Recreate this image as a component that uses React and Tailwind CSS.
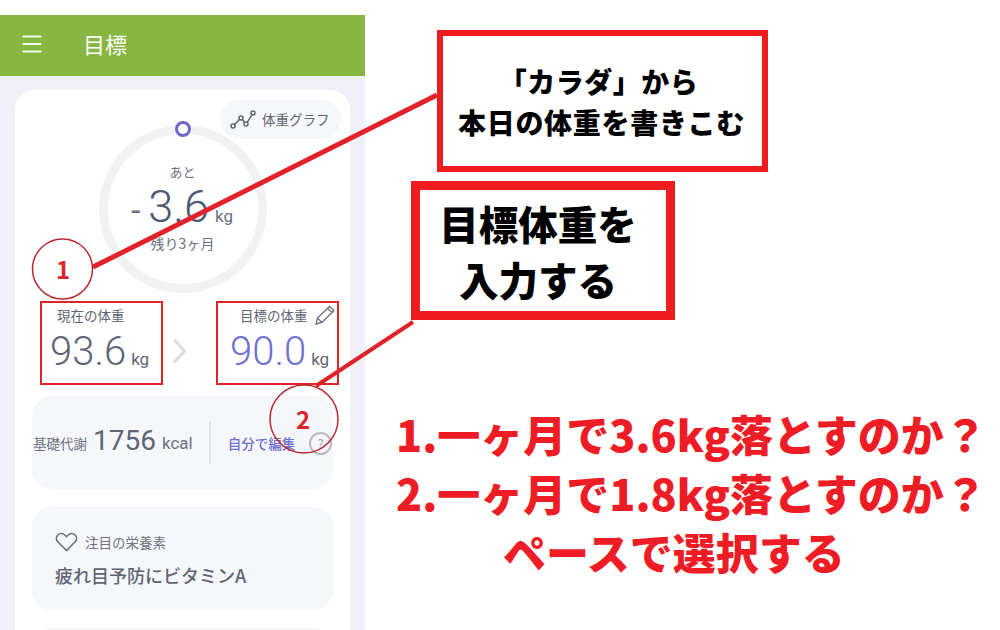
import { Menu } from "lucide-react";

const jp = "font-['Noto_Sans_CJK_JP','Noto_Sans',sans-serif]";

function Ring() {
  return (
    <div className="relative mx-auto w-[168px] h-[168px] rounded-full border-[9px] border-[#f2f2f3] flex flex-col items-center text-[#6d7280]">
      <div className="absolute -top-[13px] left-[67px] w-[16px] h-[16px] rounded-full border-[3px] border-[#6f68c9] bg-white"></div>
      <span className="mt-[28px] text-[13px] leading-[20px]">あと</span>
      <div className="flex items-baseline h-[50px] -ml-[1px] font-['Roboto',sans-serif]">
        <span className="text-[34px] leading-[50px] mr-[8px]">-</span>
        <span className="text-[45px] leading-[50px] font-light text-[#4f5872]">3.6</span>
        <span className="text-[17px] ml-[6px]">kg</span>
      </div>
      <span className="text-[14px] leading-[20px] mt-[1px]">残り3ヶ月</span>
    </div>
  );
}

function WeightRow() {
  return (
    <div className="flex items-start mt-[13px] pl-[9px] text-[#5f6575]">
      <div className="w-[124px]">
        <div className="pl-[16px] text-[13.500px] leading-[18px]">現在の体重</div>
        <div className="flex items-baseline mt-[5px] pl-[9px] font-['Roboto',sans-serif]">
          <span className="text-[40px] leading-[46px] font-light">93.6</span>
          <span className="text-[17px] ml-[5px]">kg</span>
        </div>
      </div>
      <svg width="16" height="28" viewBox="0 0 16 28" className="mt-[31px] mx-[11px]" fill="none" stroke="#dcdcdf" strokeWidth="3">
        <path d="M2 2l11 12-11 12" />
      </svg>
      <div className="w-[122px] ml-[13px]">
        <div className="flex items-center h-[18px] pl-[25px] text-[13.500px] leading-[18px] whitespace-nowrap">
          <span className="ml-[4px]">目標の体重</span>
          <svg width="22" height="22" viewBox="0 0 22 22" className="ml-[6px] shrink-0" fill="none" stroke="#6b7080" strokeWidth="1.300">
            <path d="M2 20l1.500-6L15.500 2.500l4.500 4L8 18.500z" />
            <path d="M3.500 14l4.500 4.500M13.500 4.500l4.500 4" />
          </svg>
        </div>
        <div className="flex items-baseline mt-[5px] pl-[19px] font-['Roboto',sans-serif]">
          <span className="text-[40px] leading-[46px] font-light text-[#6f70cf]">90.0</span>
          <span className="text-[17px] ml-[5px]">kg</span>
        </div>
      </div>
    </div>
  );
}

function Metabolism() {
  return (
    <div className="mt-[21px] h-[93px] rounded-[20px] bg-[#f6f7fb] flex items-start pt-[25px] text-[#6d7280]">
      <span className="text-[13.500px] leading-[44px] ml-[1px]">基礎代謝</span>
      <span className="text-[28px] leading-[40px] ml-[6px] font-['Roboto',sans-serif] text-[#5f6575]">1756</span>
      <span className="text-[17px] leading-[44px] ml-[6px] font-['Roboto',sans-serif]">kcal</span>
      <div className="w-[2px] h-[43px] bg-[#e3e4e8] ml-[16px]"></div>
      <span className="text-[13.500px] leading-[44px] ml-[17px] text-[#6f70cf] font-medium whitespace-nowrap">自分で編集</span>
      <span className="w-[23px] h-[23px] mt-[11px] ml-[14px] rounded-full border-2 border-[#b9b9bd] text-[#a5a5aa] text-[13px] leading-[19px] text-center">?</span>
    </div>
  );
}

function Nutrient() {
  return (
    <div className="mt-[18px] h-[103px] rounded-[20px] bg-[#f6f7fb] pl-[23px] pt-[23px] text-[#6d7280]">
      <div className="flex items-center">
        <svg width="23" height="20" viewBox="0 0 23 20" fill="none" stroke="#6b7080" strokeWidth="1.600">
          <path d="M11.500 18.500L2.800 9.800a5 5 0 0 1 0-6.800 5 5 0 0 1 7 0l1.700 1.700 1.700-1.700a5 5 0 0 1 7 0 5 5 0 0 1 0 6.800z" />
        </svg>
        <span className="ml-[7px] text-[13.500px] leading-[24px]">注目の栄養素</span>
      </div>
      <div className="mt-[9px] text-[18px] leading-[24px] font-medium text-[#5f6575] whitespace-nowrap">疲れ目予防にビタミンA</div>
    </div>
  );
}

function Annotations() {
  return (
    <>
      <svg width="1000" height="630" viewBox="0 0 1000 630" className="absolute left-0 top-0" fill="none">
        <path d="M93 267L437 95" stroke="#e0222a" strokeWidth="5" />
        <path d="M316 386L413 322" stroke="#e0222a" strokeWidth="4" />
        <circle cx="62.500" cy="269" r="30" stroke="#b8262e" strokeWidth="1.500" fill="#ffffff" />
        <circle cx="304" cy="419" r="34" stroke="#b8262e" strokeWidth="1.500" />
      </svg>
      <span className="absolute left-[56px] top-[253px] text-[24px] leading-[32px] font-bold text-[#d9262c]">1</span>
      <span className="absolute left-[296px] top-[403px] text-[24px] leading-[32px] font-bold text-[#d9262c]">2</span>

      <div className="absolute left-[40px] top-[301px] w-[123px] h-[84px] border-[2px] border-[#d9262c]"></div>
      <div className="absolute left-[216px] top-[301px] w-[123px] h-[84px] border-[2px] border-[#d9262c]"></div>

      <div className="absolute left-[437px] top-[30px] w-[331px] h-[142px] border-[6px] border-[#f01c20] bg-white flex flex-col items-center pt-[25px] pr-[2px] font-black text-black text-[28px] leading-[41px] whitespace-nowrap">
        <span className="mr-[6px] tracking-[0.5px]">「カラダ」から</span>
        <span className="tracking-[0.7px]">本日の体重を書きこむ</span>
      </div>

      <div className="absolute left-[411px] top-[181px] w-[264px] h-[139px] border-[9px] border-[#f01c20] bg-white flex flex-col items-center pr-[10px] font-black text-black text-[39.500px] leading-[56px] whitespace-nowrap pt-[5px]">
        <span>目標体重を</span>
        <span>入力する</span>
      </div>

      <div className="absolute left-[396px] top-[404px] w-[600px] flex flex-col font-black text-[#ee1c25] text-[43px] leading-[59px] whitespace-nowrap">
        <span>1.一ヶ月で3.6kg落とすのか？</span>
        <span>2.一ヶ月で1.8kg落とすのか？</span>
        <span className="pl-[107px]">ペースで選択する</span>
      </div>
    </>
  );
}

export default function App() {
  return (
    <div className={`relative w-[1000px] h-[630px] bg-white overflow-hidden ${jp}`}>
      <div className="w-[365px] h-full pt-[15px] flex flex-col">
        <header className="h-[61px] bg-[#88b642] flex items-center pl-[19px] pb-[4px] text-white shrink-0">
          <Menu size={26} strokeWidth={1.800} className="opacity-90" />
          <span className="ml-[38px] text-[22px]">目標</span>
        </header>
        <main className="flex-1 bg-[#f0f0f6] px-[15px] pt-[14px] overflow-hidden">
          <div className="relative h-[600px] rounded-[20px] bg-white px-[17px] pt-[35px]">
            <div className="absolute left-[205px] top-[10px] w-[121px] h-[39px] rounded-full bg-[#f6f7fb] flex items-center pl-[10px] text-[13.500px] text-[#5f6575] whitespace-nowrap">
              <svg width="26" height="20" viewBox="0 0 26 20" fill="none" stroke="#5f6575" strokeWidth="1.500">
                <circle cx="3" cy="16" r="2" />
                <circle cx="11" cy="8" r="2" />
                <circle cx="16" cy="14" r="2" />
                <circle cx="23" cy="3" r="2" />
                <path d="M4.500 14.500L9.500 9.500M12.500 9.500L14.500 12.500M17.200 12.300L22 4.800" />
              </svg>
              <span className="ml-[6px]">体重グラフ</span>
            </div>
            <Ring />
            <WeightRow />
            <Metabolism />
            <Nutrient />
            <div className="mt-[18px] h-[40px] rounded-t-[20px] bg-[#f6f7fb]"></div>
          </div>
        </main>
      </div>
      <Annotations />
    </div>
  );
}
